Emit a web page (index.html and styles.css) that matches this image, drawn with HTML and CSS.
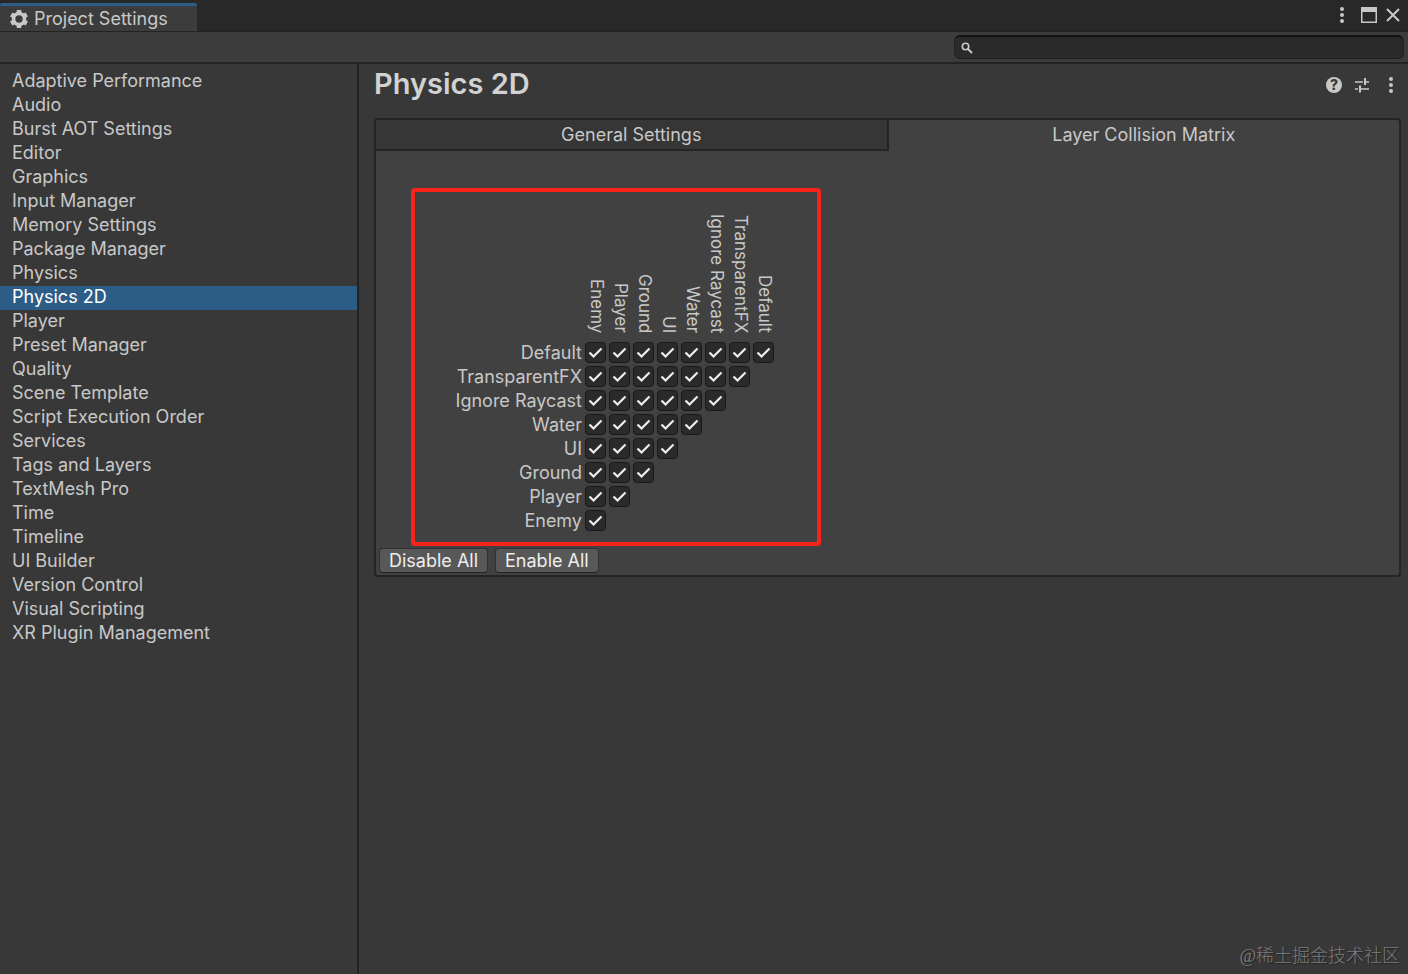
FILE: index.html
```
<!DOCTYPE html>
<html lang="en">
<head>
    <meta charset="utf-8">
    <title>Project Settings</title>
    <link rel="stylesheet" href="styles.css">
</head>
<body>

<!-- Window title bar -->
<header class="titlebar">
    <div class="window-tab">
        <svg width="20" height="20" viewBox="0 0 20 20"><g fill="none" stroke="#c8c8c8"><circle cx="10" cy="10" r="5.500" stroke-width="3.600"/><path stroke-width="4.500" d="M10 1v3.500M10 15.500V19M2.200 5.500l3 1.800M14.800 12.700l3 1.800M2.200 14.500l3-1.800M14.800 7.300l3-1.800"/></g></svg>
        <span>Project Settings</span>
    </div>
    <div class="window-controls">
        <button type="button" aria-label="Menu"><svg width="6" height="18" viewBox="0 0 6 18" fill="#c8c8c8"><circle cx="3" cy="3" r="2"/><circle cx="3" cy="9" r="2"/><circle cx="3" cy="15" r="2"/></svg></button>
        <button type="button" aria-label="Maximize"><svg width="16" height="16" viewBox="0 0 16 16"><path fill="#c8c8c8" fill-rule="evenodd" d="M0 0h16v16H0zM1.500 5v9.500h13V5z"/></svg></button>
        <button type="button" aria-label="Close"><svg width="14" height="14" viewBox="0 0 14 14"><path stroke="#c8c8c8" stroke-width="2" d="M1 1l12 12M13 1L1 13"/></svg></button>
    </div>
</header>

<!-- Search -->
<div class="toolbar">
    <label class="search">
        <svg width="12" height="12" viewBox="0 0 12 12" fill="none" stroke="#c8c8c8"><circle cx="4.500" cy="4.500" r="3.200" stroke-width="1.600"/><path stroke-width="2" d="M7 7l4 4"/></svg>
        <input type="text" aria-label="Search settings">
    </label>
</div>

<div class="main">
    <nav class="sidebar">
        <a href="#">Adaptive Performance</a>
        <a href="#">Audio</a>
        <a href="#">Burst AOT Settings</a>
        <a href="#">Editor</a>
        <a href="#">Graphics</a>
        <a href="#">Input Manager</a>
        <a href="#">Memory Settings</a>
        <a href="#">Package Manager</a>
        <a href="#">Physics</a>
        <a href="#" class="active">Physics 2D</a>
        <a href="#">Player</a>
        <a href="#">Preset Manager</a>
        <a href="#">Quality</a>
        <a href="#">Scene Template</a>
        <a href="#">Script Execution Order</a>
        <a href="#">Services</a>
        <a href="#">Tags and Layers</a>
        <a href="#">TextMesh Pro</a>
        <a href="#">Time</a>
        <a href="#">Timeline</a>
        <a href="#">UI Builder</a>
        <a href="#">Version Control</a>
        <a href="#">Visual Scripting</a>
        <a href="#">XR Plugin Management</a>
    </nav>

    <main class="content">
        <div class="content-header">
            <h1>Physics 2D</h1>
            <div class="header-actions">
                <button type="button" class="help" aria-label="Help">?</button>
                <button type="button" aria-label="Presets"><svg width="16" height="16" viewBox="0 0 16 16" stroke="#c8c8c8" stroke-width="1.500"><path d="M1 5h8M12 5h3M1 12h3M7 12h8"/><path stroke-width="2" d="M11 1v7M6 8.500v7"/></svg></button>
                <button type="button" aria-label="More"><svg width="6" height="18" viewBox="0 0 6 18" fill="#c8c8c8"><circle cx="3" cy="3" r="2"/><circle cx="3" cy="9" r="2"/><circle cx="3" cy="15" r="2"/></svg></button>
            </div>
        </div>

        <section class="panel">
            <div class="tabs">
                <button type="button" class="tab">General Settings</button>
                <button type="button" class="tab selected">Layer Collision Matrix</button>
            </div>
            <div class="highlight">
                <table id="matrix" class="matrix"></table>
            </div>
            <div class="actions">
                <button type="button" id="disableAll">Disable All</button>
                <button type="button" id="enableAll">Enable All</button>
            </div>
        </section>
    </main>
</div>

<div class="watermark">@稀土掘金技术社区</div>

<script>
var layers = ["Default", "TransparentFX", "Ignore Raycast", "Water", "UI", "Ground", "Player", "Enemy"];
var columns = layers.slice().reverse();

// Column headers run in the opposite order to the rows
var html = "<thead><tr><td></td>";
columns.forEach(function(name) {
    html += "<th scope='col'><span>" + name + "</span></th>";
});
html += "</tr></thead><tbody>";

layers.forEach(function(row, i) {
    html += "<tr><th scope='row'>" + row + "</th>";
    for (var j = 0; j < layers.length - i; j++) {
        html += "<td><input type='checkbox' checked aria-label='" + row + " / " + columns[j] + "'></td>";
    }
    html += "</tr>";
});
document.getElementById('matrix').innerHTML = html + "</tbody>";

function setAll(value) {
    document.querySelectorAll('#matrix input').forEach(function(box) {
        box.checked = value;
    });
}
document.getElementById('disableAll').addEventListener('click', function() { setAll(false); });
document.getElementById('enableAll').addEventListener('click', function() { setAll(true); });
</script>

</body>
</html>
```
FILE: styles.css
```
* {
    box-sizing: border-box;
}

body {
    display: flex;
    flex-direction: column;
    min-height: 100vh;
    margin: 0;
    background-color: #383838;
    color: #c8c8c8;
    font-family: Inter, "Noto Sans CJK SC", sans-serif;
    font-size: 18px;
    line-height: 24px;
}

button {
    padding: 0;
    border: none;
    background: none;
    color: inherit;
    font: inherit;
}

svg {
    display: block;
}

.titlebar {
    display: flex;
    justify-content: space-between;
    height: 32px;
    padding-top: 3px;
    border-bottom: 1px solid #232323;
    background-color: #282828;
}

.window-tab {
    display: flex;
    align-items: center;
    gap: 5px;
    padding: 0 29px 0 9px;
    border-top: 3px solid #2c5d87;
    border-radius: 2px 2px 0 0;
    background-color: #3c3c3c;
}

.window-controls {
    display: flex;
    align-items: center;
    gap: 9px;
    padding: 0 8px 4px 0;
}

.window-controls button:first-child {
    margin-right: 7px;
}

.toolbar {
    display: flex;
    justify-content: flex-end;
    height: 32px;
    padding: 3px 4px;
    border-bottom: 2px solid #232323;
    background-color: #3c3c3c;
}

.search {
    display: flex;
    align-items: center;
    gap: 6px;
    width: 450px;
    height: 24px;
    padding: 0 6px;
    border: 1px solid #212121;
    border-top: 2px solid #121212;
    border-radius: 6px;
    background-color: #2a2a2a;
}

.search input {
    flex: 1;
    min-width: 0;
    padding: 0;
    border: none;
    outline: none;
    background: none;
    color: inherit;
    font: inherit;
}

.main {
    display: flex;
    flex: 1;
}

.sidebar {
    flex: 0 0 359px;
    padding-top: 6px;
    border-right: 2px solid #232323;
}

.sidebar a {
    display: block;
    padding: 0 0 2px 12px;
    color: inherit;
    line-height: 22px;
    text-decoration: none;
}

.sidebar a.active {
    background-color: #2c5d87;
    color: #fff;
}

.content {
    flex: 1;
    padding: 0 7px 0 15px;
}

.content-header {
    display: flex;
    align-items: center;
    justify-content: space-between;
    height: 40px;
    margin-bottom: 14px;
}

h1 {
    margin: 0;
    color: #d2d2d2;
    font-size: 29px;
    font-weight: 600;
    line-height: 32px;
}

.header-actions {
    display: flex;
    align-items: center;
    gap: 12px;
    padding: 2px 7px 0 0;
}

.header-actions button:last-child {
    margin-left: 6px;
}

.help {
    width: 16px;
    height: 16px;
    border-radius: 50%;
    background-color: #c8c8c8;
    color: #383838;
    font-size: 14px;
    font-weight: 800;
    line-height: 16px;
}

.panel {
    border: 2px solid #242424;
    border-radius: 4px;
    background-color: #414141;
}

.tabs {
    display: flex;
}

.tab {
    flex: 1;
    height: 31px;
    border-bottom: 2px solid transparent;
}

.tab:not(.selected) {
    border-right: 2px solid #242424;
    border-bottom-color: #242424;
    background-color: #363636;
}

.highlight {
    width: 410px;
    margin: 37px 0 0 35px;
    padding-bottom: 9px;
    border: 4px solid #f8231a;
    border-radius: 4px;
}

.matrix {
    border-collapse: collapse;
}

.matrix th,
.matrix td {
    width: 24px;
    height: 24px;
    padding: 0;
    font-weight: normal;
}

.matrix td {
    padding-top: 1px;
    vertical-align: top;
}

.matrix thead th {
    height: 149px;
    padding: 0 0 8px 4px;
    font-size: 17px;
    line-height: 20px;
    vertical-align: bottom;
}

.matrix thead span {
    display: block;
    writing-mode: vertical-rl;
    white-space: nowrap;
}

.matrix tbody th {
    width: 168px;
    padding-right: 1px;
    text-align: right;
}

.matrix input {
    appearance: none;
    display: block;
    width: 21px;
    height: 21px;
    margin: 0 0 0 2px;
    border: 1px solid #1a1a1a;
    border-radius: 4px;
    background-color: #2a2a2a;
}

.matrix input:checked {
    background-image: url("data:image/svg+xml,%3Csvg xmlns='http://www.w3.org/2000/svg' viewBox='0 0 19 19'%3E%3Cpath d='M3.500 9.500l4 4 8-8' fill='none' stroke='%23eee' stroke-width='2.200'/%3E%3C/svg%3E");
}

.actions {
    display: flex;
    gap: 7px;
    padding: 2px 3px;
}

.actions button {
    height: 25px;
    padding: 0 9px;
    border: 1px solid #303030;
    border-bottom-color: #242424;
    border-radius: 4px;
    background-color: #585858;
    color: #eee;
}

.watermark {
    position: absolute;
    right: 8px;
    bottom: 6px;
    color: #7c7c7c;
    font-family: "Liberation Serif", "Noto Sans CJK SC", serif;
    font-weight: 300;
    text-shadow: 1px 1px 1px #222;
}
```
